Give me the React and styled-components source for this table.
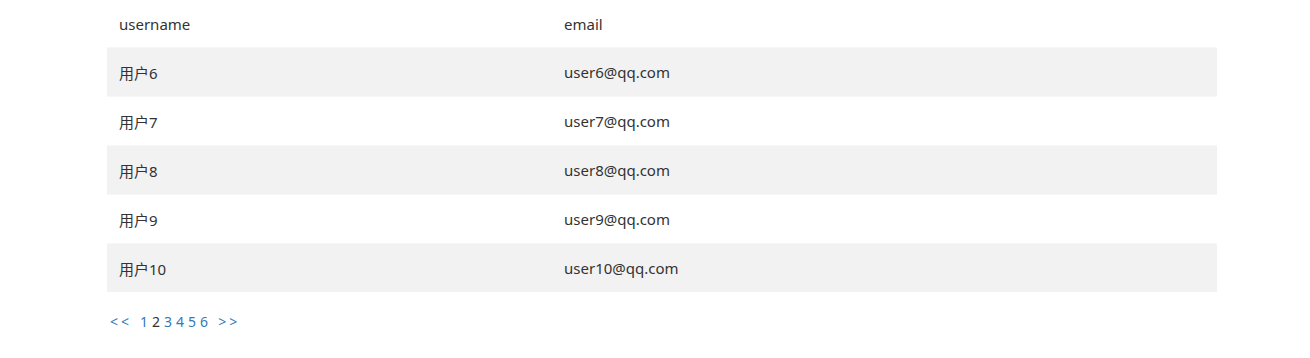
import React from 'react'
import styled, { createGlobalStyle } from 'styled-components'

const GlobalStyle = createGlobalStyle`
  body {
    margin: 0;
    background: #fff;
    font-family: "Noto Sans", "Noto Sans CJK SC", sans-serif;
    color: #333;
  }
`

const Page = styled.div`
  width: 1110px;
  margin-left: 107px;
`

const Table = styled.div`
  display: flex;
  flex-direction: column;
`

const Row = styled.div`
  display: grid;
  grid-template-columns: 445px 1fr;
  height: ${props => (props.head ? '47px' : '49px')};
  box-sizing: border-box;
  border-top: ${props => (props.head ? 'none' : '1px solid #f7f7f7')};
  background: ${props => (props.striped ? '#f2f2f2' : '#fff')};
`

const Cell = styled.div`
  display: flex;
  align-items: center;
  padding: 0 12px;
  font-size: 15px;
  color: #333;
`

const Pager = styled.div`
  display: flex;
  align-items: center;
  height: 58px;
  padding-left: 3px;
  font-size: 14px;
`

const PageLink = styled.a`
  color: ${props => (props.current ? '#333' : '#337ab7')};
  text-decoration: none;
  margin-right: ${props => props.gap || 4}px;
  letter-spacing: ${props => (props.arrow ? '3px' : '0')};
`

const users = [6, 7, 8, 9, 10]

export default () =>
  <Page>
    <GlobalStyle />
    <Table>
      <Row head>
        <Cell>username</Cell>
        <Cell>email</Cell>
      </Row>
      {users.map((n, i) =>
        <Row key={n} striped={i % 2 === 0}>
          <Cell>用户{n}</Cell>
          <Cell>user{n}@qq.com</Cell>
        </Row>
      )}
    </Table>
    <Pager>
      <PageLink arrow gap={8}>&lt;&lt;</PageLink>
      {[1, 2, 3, 4, 5, 6].map(p =>
        <PageLink key={p} current={p === 2} gap={p === 6 ? 10 : 4}>{p}</PageLink>
      )}
      <PageLink arrow>&gt;&gt;</PageLink>
    </Pager>
  </Page>
